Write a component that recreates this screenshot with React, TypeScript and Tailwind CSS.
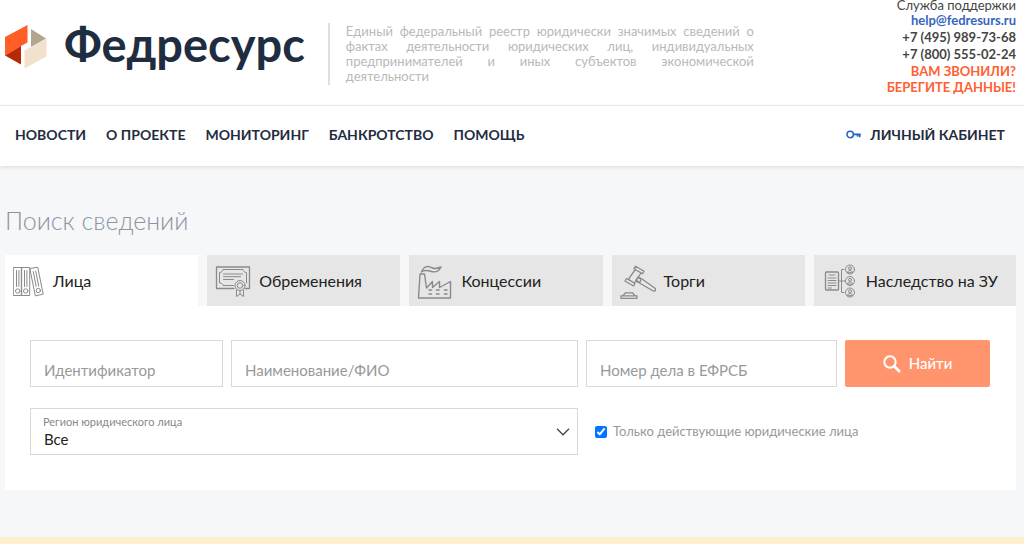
import type { ReactNode } from 'react';
import { useState } from 'react';

const navLinks = ['Новости', 'О проекте', 'Мониторинг', 'Банкротство', 'Помощь'];

function Logo() {
  return (
    <svg viewBox="0 0 42 44" className="h-11 w-[42px] shrink-0" aria-hidden="true">
      <path d="M0 12 22.500 0v17.500L16 21 0 30.500z" fill="#ff5f26" />
      <path d="M0 30.500 16 21v18.500z" fill="#b72a06" />
      <path d="M26 4 41 13.500 26 22z" fill="#b3a48e" />
      <path d="M19.500 25.500 41.500 13.500v18L19.500 43.500z" fill="#f1e1cd" />
    </svg>
  );
}

function KeyIcon() {
  return (
    <svg viewBox="0 0 16 10" className="h-[10px] w-4" fill="none" stroke="#1f63bd" strokeWidth="1.500" aria-hidden="true">
      <circle cx="4.200" cy="4.500" r="3.200" />
      <path d="M7.400 4.300h7.400M13.600 4.500v2.700M11.500 4.500v2" strokeWidth="1.700" />
    </svg>
  );
}

function TabIcon({ children, width = 36 }: { children: ReactNode; width?: number }) {
  return (
    <svg
      viewBox={`0 0 ${width} 36`}
      className="h-9 shrink-0"
      fill="none"
      stroke="#8a8a8a"
      strokeWidth="1"
      strokeLinejoin="round"
      strokeLinecap="round"
      aria-hidden="true"
    >
      {children}
    </svg>
  );
}

function FoldersIcon() {
  return (
    <TabIcon width={32}>
      <path d="M.7 4.500h8v28h-8zM8.700 4.500h8v28h-8zM17.200 5.500l7.500-1.300 5.500 27-7.500 1.600z" />
      <path d="M3.500 7.500v16M5.900 7.500v16M11.500 7.500v16M13.900 7.500v16M20.200 8.500l3 15M22.700 8l3 15" />
      <circle cx="4.700" cy="28" r="2.200" />
      <circle cx="12.700" cy="28" r="2.200" />
      <circle cx="25.300" cy="27.500" r="2.200" />
    </TabIcon>
  );
}

function CertificateIcon() {
  return (
    <TabIcon>
      <path d="M19 25.500H1.500V4h33v21.500h-4.500" strokeWidth="1.300" />
      <path d="M18.500 22.500H8c0-1.500-1.500-2.500-3.500-2.500V9.500C6.500 9.500 8 8 8 6.500h20c0 1.500 1.500 3 3.500 3V20" />
      <path d="M8.500 11h19M8.500 13.700h17M8.500 16.500h10" />
      <circle cx="25" cy="22.500" r="5" fill="#e6e6e6" />
      <circle cx="25" cy="22.500" r="2.800" />
      <path d="M21.500 27v6.500l3.500-2.500 3.500 2.500V27M25 27.500V31" />
    </TabIcon>
  );
}

function FactoryIcon() {
  return (
    <TabIcon>
      <path
        d="M1.500 35 3 11h4.500l2 14 6-6.500v6l7-6v6l11-6V35zM4.500 9c3-7 7-6 11-4 3 1.300 5 .5 8.500-1-2.500 5-6 5.500-9.500 4.500C11 7.300 8 6.500 4.500 9z"
        strokeWidth="1.400"
      />
      <path d="M12 27h2.500M12 31h2.500M19.500 27H22M19.500 31H22M27.500 27H30M27.500 31H30" strokeWidth="1.600" />
    </TabIcon>
  );
}

function GavelIcon() {
  return (
    <TabIcon>
      <g strokeWidth="1.300">
        <path d="m15.500 3.300 8.500 5-1.500 2.400-8.500-5zM6.500 15.500l8.500 5-1.500 2.500-8.500-5zM15.300 6.500 8.300 16.300l6 3.700 6.700-10z" />
        <path d="m18 14 4 2 13 9.300c1.300 1.300.2 3.500-1.800 2.700L19.500 20l-3-2.800" />
        <circle cx="18.500" cy="17" r="2.200" />
        <path d="M1 35.300v-2.500h16v2.500zM3 32.600 5.500 29.800h7l2.500 2.800" />
      </g>
    </TabIcon>
  );
}

function Person({ y }: { y: number }) {
  return (
    <g>
      <circle cx="28" cy={y} r="4.500" />
      <circle cx="28" cy={y - 1.2} r="1.500" />
      <path d={`M25.500 ${y + 2.8}c.5-2.500 4.500-2.500 5 0z`} />
    </g>
  );
}

function InheritanceIcon() {
  return (
    <TabIcon>
      <rect x="3.500" y="9" width="13" height="18" rx="1" strokeWidth="1.300" />
      <path d="M7 12h6M6 15h8M6 17.500h8M6 20h8M6 22.500h8M6 25h3.500" />
      <path d="M16.500 18h7M22 6.500h-2.500v23H22" />
      <Person y={6.5} />
      <Person y={18} />
      <Person y={29.5} />
    </TabIcon>
  );
}

const tabs = [
  { title: 'Лица', icon: <FoldersIcon /> },
  { title: 'Обременения', icon: <CertificateIcon /> },
  { title: 'Концессии', icon: <FactoryIcon /> },
  { title: 'Торги', icon: <GavelIcon /> },
  { title: 'Наследство на ЗУ', icon: <InheritanceIcon /> },
];

const inputClass =
  'h-[47px] w-full min-w-0 border border-[#d9d9d9] bg-white px-[13px] pt-3 text-[15px] text-[#222] placeholder:text-[#999] outline-none focus:border-[#999]';

export default function App() {
  const [active, setActive] = useState(0);

  return (
    <div className="min-h-screen bg-[#f6f7f9] font-['Lato','Open_Sans',sans-serif] text-[#222]">
      {/* Header */}
      <header className="flex items-start justify-between border-b border-[#ececec] bg-white pr-2 pb-[10px] pl-[5px]">
        <div className="flex items-start pt-[23px]">
          <a href="#" className="flex items-start gap-[17px] pt-0.5 text-[#1f2d41]">
            <Logo />
            <span className="text-[47px] leading-[38px] font-bold">Федресурс</span>
          </a>
          <p className="ml-[23px] w-[426px] border-l-2 border-[#dedede] py-px pl-4 text-justify text-[13px] leading-[15px] text-[#b9b9b9]">
            Единый федеральный реестр юридически значимых сведений о фактах деятельности юридических лиц,
            индивидуальных предпринимателей и иных субъектов экономической деятельности
          </p>
        </div>
        <div className="flex flex-col gap-px text-right text-[13px] leading-4 text-[#444]">
          <p className="pb-px leading-[10px]">Служба поддержки</p>
          <p className="font-bold">
            <a href="mailto:help@fedresurs.ru" className="text-[#3565bd]">help@fedresurs.ru</a>
          </p>
          <p className="font-bold">+7 (495) 989-73-68</p>
          <p className="font-bold">+7 (800) 555-02-24</p>
          <p className="font-bold text-[#ff5f32]">
            ВАМ ЗВОНИЛИ?
            <br />
            БЕРЕГИТЕ ДАННЫЕ!
          </p>
        </div>
      </header>

      {/* Navigation */}
      <nav className="flex items-center justify-between bg-white px-[15px] pt-[17px] pb-[19px] text-sm leading-6 font-bold text-[#1f2d41] uppercase shadow-[0_1px_4px_rgba(0,0,0,0.12)]">
        <ul className="flex gap-5">
          {navLinks.map((link) => (
            <li key={link}>
              <a href="#">{link}</a>
            </li>
          ))}
        </ul>
        <a href="#" className="mr-1 flex items-center gap-2">
          <KeyIcon />
          Личный кабинет
        </a>
      </nav>

      {/* Search */}
      <main className="pt-9 pr-2 pb-[47px] pl-[5px]">
        <h1 className="text-[25px] leading-9 font-light text-[#8b95a1]">Поиск сведений</h1>

        <div role="tablist" className="mt-[17px] flex">
          {tabs.map((tab, idx) => (
            <div key={tab.title} className="w-1/5 pr-[9px] last:pr-0">
              <button
                type="button"
                role="tab"
                aria-selected={idx === active}
                onClick={() => setActive(idx)}
                className={`flex h-[51px] w-full items-center gap-2 pl-2 text-base whitespace-nowrap ${
                  idx === active ? 'bg-white' : 'bg-[#e6e6e6]'
                }`}
              >
                {tab.icon}
                {tab.title}
              </button>
            </div>
          ))}
        </div>

        <form
          onSubmit={(e) => e.preventDefault()}
          className="grid grid-cols-[193fr_347fr_251fr_145fr] gap-x-2 gap-y-[21px] bg-white pt-[34px] pr-[26px] pb-[35px] pl-[25px]"
        >
          <input className={inputClass} aria-label="Идентификатор" placeholder="Идентификатор" />
          <input className={inputClass} aria-label="Наименование/ФИО" placeholder="Наименование/ФИО" />
          <input className={inputClass} aria-label="Номер дела в ЕФРСБ" placeholder="Номер дела в ЕФРСБ" />
          <button
            type="submit"
            className="flex h-[47px] items-center justify-center gap-2 rounded-xs bg-[#ff946d] text-[15px] font-medium text-white"
          >
            <svg viewBox="0 0 18 18" className="size-[18px]" fill="none" stroke="currentColor" aria-hidden="true">
              <circle cx="7" cy="7" r="5.700" strokeWidth="2" />
              <path d="m11 11 6 6" strokeWidth="2.600" />
            </svg>
            Найти
          </button>

          <div className="relative col-span-2">
            <label htmlFor="region" className="pointer-events-none absolute top-1.5 left-[13px] text-[11px] leading-4 text-[#888]">
              Регион юридического лица
            </label>
            <select
              id="region"
              className="h-[47px] w-full appearance-none border border-[#d9d9d9] bg-white px-[13px] pt-4 text-[15px] outline-none"
            >
              <option>Все</option>
            </select>
            <svg
              viewBox="0 0 14 8"
              className="pointer-events-none absolute top-5 right-2 h-2 w-[14px]"
              fill="none"
              stroke="#444"
              strokeWidth="1.300"
              aria-hidden="true"
            >
              <path d="m1 .8 6 6 6-6" />
            </svg>
          </div>
          <label className="col-span-2 flex items-center gap-[6px] pl-[9px] text-[13px] text-[#999]">
            <input type="checkbox" defaultChecked className="size-3 accent-[#0075ff]" />
            Только действующие юридические лица
          </label>
        </form>
      </main>

      <div className="h-2 bg-[#fff0cb]" />
    </div>
  );
}
